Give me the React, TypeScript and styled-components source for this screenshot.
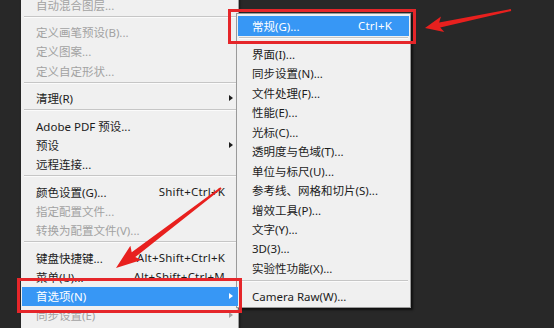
import styled, { createGlobalStyle } from 'styled-components'

const GlobalStyle = createGlobalStyle`
    html, body {
        margin: 0;
        padding: 0;
        background: #282828;
    }
`

const Page = styled.div`
    position: relative;
    width: 554px;
    height: 328px;
    overflow: hidden;
    background: #282828;
    display: flex;
    align-items: flex-start;
    padding-left: 21px;
    box-sizing: border-box;
    font-family: 'Noto Sans', 'Noto Sans CJK SC', sans-serif;
    font-size: 11.5px;
`

const MainMenu = styled.div`
    width: 218px;
    margin-top: -5px;
    padding-left: 1px;
    box-sizing: border-box;
    align-self: stretch;
    margin-bottom: -20px;
    background: #f0f0f0;
    border-right: 1px solid #9d9d9d;
    box-shadow: 1px 0 2px rgba(0, 0, 0, 0.5);
`

const SubMenu = styled.div`
    width: 175px;
    margin-left: -3px;
    margin-top: 13px;
    padding: 2px 1px 1px 1px;
    box-sizing: border-box;
    background: #f0f0f0;
    border: 1px solid #9a9a9a;
    box-shadow: 2px 2px 2px rgba(0, 0, 0, 0.6);
`

const Row = styled.div<{ $h: number; $active?: boolean; $disabled?: boolean }>`
    position: relative;
    display: flex;
    align-items: center;
    height: ${p => p.$h}px;
    padding-left: 14px;
    white-space: nowrap;
    background: ${p => (p.$active ? '#3797f5' : 'transparent')};
    color: ${p => (p.$active ? '#ffffff' : p.$disabled ? '#a2a2a2' : '#1c1c1c')};
`

const Label = styled.span`
    flex: 1;
`

const Shortcut = styled.span`
    letter-spacing: 0.2px;
`

const Trail = styled.span<{ $w: number }>`
    width: ${p => p.$w}px;
    display: flex;
    align-items: center;
    padding-left: 4px;
    box-sizing: border-box;
`

const SubArrow = styled.span`
    width: 0;
    height: 0;
    border-top: 3.5px solid transparent;
    border-bottom: 3.5px solid transparent;
    border-left: 4px solid currentColor;
`

const Separator = styled.div<{ $h: number; $inset: number }>`
    height: ${p => p.$h}px;
    padding: 1.5px ${p => p.$inset}px 0 ${p => p.$inset}px;
    box-sizing: border-box;

    &::before {
        content: '';
        display: block;
        height: 1px;
        background: #c6c6c6;
        border-bottom: 1px solid #fbfbfb;
    }
`

const Mark = styled.div<{ $t: number; $r: number; $b: number; $l: number }>`
    position: absolute;
    top: ${p => p.$t}px;
    right: ${p => p.$r}px;
    bottom: ${p => p.$b}px;
    left: ${p => p.$l}px;
    border: 3px solid #e5262a;
    z-index: 2;
    pointer-events: none;
`

const Overlay = styled.svg`
    position: absolute;
    inset: 0;
    z-index: 3;
    pointer-events: none;
`

type Item =
    | { sep: true }
    | { sep?: false; label: string; shortcut?: string; arrow?: boolean; disabled?: boolean; active?: boolean }

const mainItems: Item[] = [
    { label: '自动混合图层...', disabled: true },
    { sep: true },
    { label: '定义画笔预设(B)...', disabled: true },
    { label: '定义图案...', disabled: true },
    { label: '定义自定形状...', disabled: true },
    { sep: true },
    { label: '清理(R)', arrow: true },
    { sep: true },
    { label: 'Adobe PDF 预设...' },
    { label: '预设', arrow: true },
    { label: '远程连接...' },
    { sep: true },
    { label: '颜色设置(G)...', shortcut: 'Shift+Ctrl+K' },
    { label: '指定配置文件...', disabled: true },
    { label: '转换为配置文件(V)...', disabled: true },
    { sep: true },
    { label: '键盘快捷键...', shortcut: 'Alt+Shift+Ctrl+K' },
    { label: '菜单(U)...', shortcut: 'Alt+Shift+Ctrl+M' },
    { label: '首选项(N)', arrow: true, active: true },
    { label: '同步设置(E)', arrow: true, disabled: true },
]

const subItems: Item[] = [
    { label: '常规(G)...', shortcut: 'Ctrl+K', active: true },
    { sep: true },
    { label: '界面(I)...' },
    { label: '同步设置(N)...' },
    { label: '文件处理(F)...' },
    { label: '性能(E)...' },
    { label: '光标(C)...' },
    { label: '透明度与色域(T)...' },
    { label: '单位与标尺(U)...' },
    { label: '参考线、网格和切片(S)...' },
    { label: '增效工具(P)...' },
    { label: '文字(Y)...' },
    { label: '3D(3)...' },
    { label: '实验性功能(X)...' },
    { sep: true },
    { label: 'Camera Raw(W)...' },
]

function arrowPoints(tx: number, ty: number, hx: number, hy: number, headLen: number, headHalf: number, tailW: number, neckW: number) {
    const dx = hx - tx
    const dy = hy - ty
    const len = Math.hypot(dx, dy)
    const ux = dx / len
    const uy = dy / len
    const px = -uy
    const py = ux
    const bx = hx - ux * headLen
    const by = hy - uy * headLen
    const pts = [
        [tx + (px * tailW) / 2, ty + (py * tailW) / 2],
        [bx + (px * neckW) / 2, by + (py * neckW) / 2],
        [bx - ux * 3 + px * headHalf, by - uy * 3 + py * headHalf],
        [hx, hy],
        [bx - ux * 3 - px * headHalf, by - uy * 3 - py * headHalf],
        [bx - (px * neckW) / 2, by - (py * neckW) / 2],
        [tx - (px * tailW) / 2, ty - (py * tailW) / 2],
    ]
    return pts.map(p => `${p[0].toFixed(1)},${p[1].toFixed(1)}`).join(' ')
}

function Menu({ items, rowH, sepH, sepInset, trail, mark }: {
    items: Item[]
    rowH: number
    sepH: number
    sepInset: number
    trail: number
    mark: { t: number; r: number; b: number; l: number }
}) {
    return (
        <>
            {items.map((item, i) =>
                item.sep ? (
                    <Separator key={i} $h={sepH} $inset={sepInset} />
                ) : (
                    <Row key={i} $h={rowH} $active={item.active} $disabled={item.disabled}>
                        <Label>{item.label}</Label>
                        {item.shortcut && <Shortcut>{item.shortcut}</Shortcut>}
                        <Trail $w={trail}>{item.arrow && <SubArrow />}</Trail>
                        {item.active && <Mark $t={mark.t} $r={mark.r} $b={mark.b} $l={mark.l} />}
                    </Row>
                ),
            )}
        </>
    )
}

export default function App() {
    return (
        <>
            <GlobalStyle />
            <Page>
                <MainMenu>
                    <Menu items={mainItems} rowH={19.25} sepH={8.25} sepInset={2} trail={13} mark={{ t: -8.5, r: -4, b: -7, l: -5 }} />
                </MainMenu>
                <SubMenu>
                    <Menu items={subItems} rowH={19.5} sepH={8.5} sepInset={1} trail={17} mark={{ t: -7, r: -7, b: -8, l: -10 }} />
                </SubMenu>
                <Overlay width={554} height={328} viewBox="0 0 554 328">
                    <polygon points={arrowPoints(511, 10, 425, 28, 15, 8, 2, 5)} fill="#e8201e" />
                    <polygon points={arrowPoints(221, 188, 116, 268, 22, 9, 2, 6)} fill="#e8201e" />
                </Overlay>
            </Page>
        </>
    )
}
